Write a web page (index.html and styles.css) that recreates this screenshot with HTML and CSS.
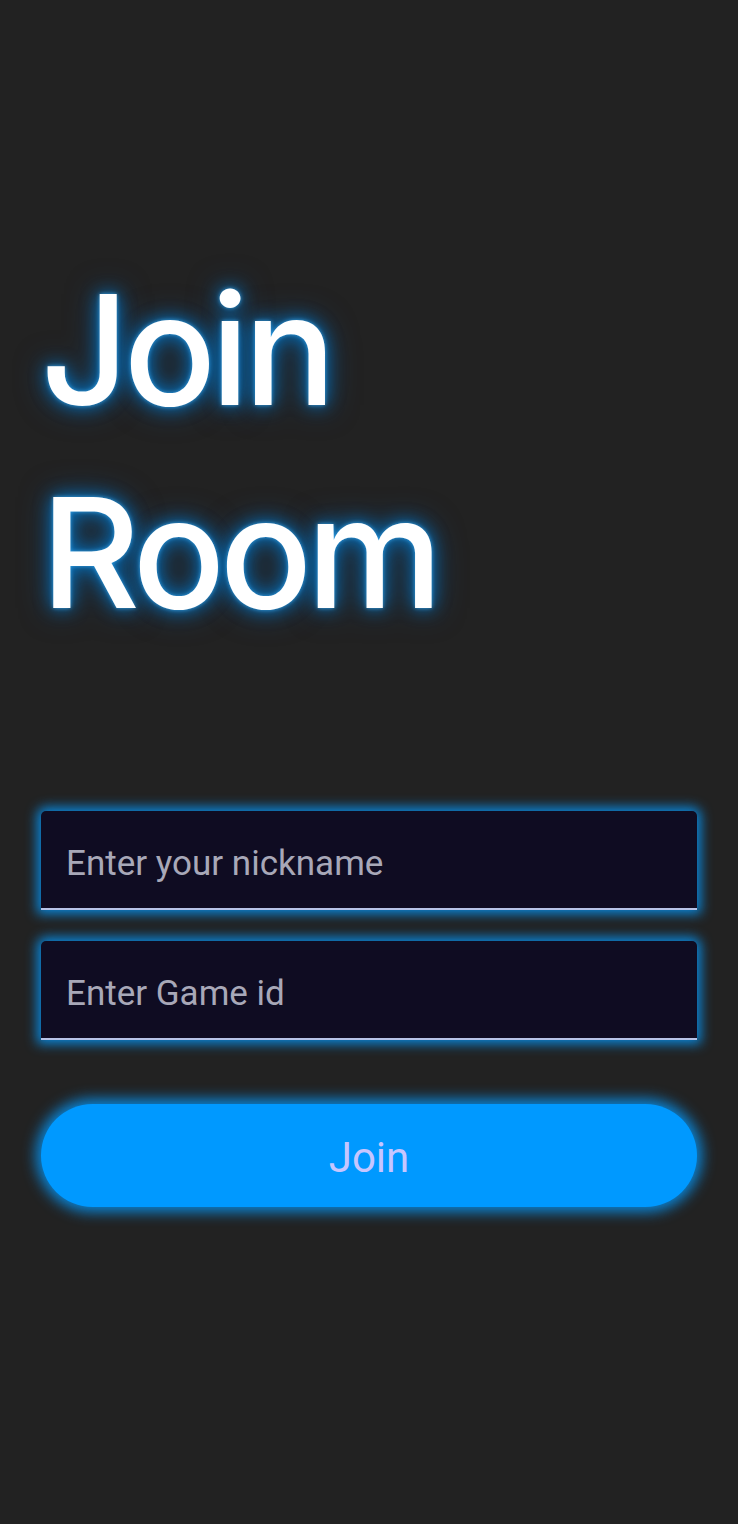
FILE: index.html
```html
<!DOCTYPE html>
<html>
<head>
<meta charset="utf-8">
<link rel="stylesheet" href="styles.css">
</head>
<body>
<main class="screen">
  <h1 class="title">Join<br>Room</h1>
  <form class="form">
    <div class="field"><input class="input" type="text" placeholder="Enter your nickname"></div>
    <div class="field"><input class="input" type="text" placeholder="Enter Game id"></div>
    <button class="btn" type="button">Join</button>
  </form>
</main>
</body>
</html>
```
FILE: styles.css
```css
html, body {
  margin: 0;
  padding: 0;
  background: #222222;
}
.screen {
  width: 738px;
  height: 1524px;
  box-sizing: border-box;
  padding: 248px 41px 0 41px;
  display: flex;
  flex-direction: column;
}
.title {
  margin: 0;
  font-family: "Inter", sans-serif;
  font-weight: 500;
  font-size: 153px;
  line-height: 203px;
  letter-spacing: -0.035em;
  color: #ffffff;
  text-shadow: 0 0 4px rgba(60, 170, 240, 0.9), 0 0 18px rgba(0, 130, 220, 0.9), 0 0 32px rgba(0, 100, 180, 0.6);
}
.form {
  margin-top: 157px;
  display: flex;
  flex-direction: column;
}
.field {
  height: 99px;
  background: #0f0c22;
  border-radius: 5px 5px 0 0;
  border-bottom: 2px solid #b8c4e8;
  box-sizing: border-box;
  box-shadow: 0 0 12px 4px #0a86d8;
  display: flex;
  align-items: center;
  padding-top: 7px;
  margin-bottom: 31px;
}
.input {
  width: 100%;
  background: transparent;
  border: none;
  outline: none;
  padding: 0 25px;
  font-family: "Roboto", sans-serif;
  font-size: 35px;
  color: #c8c8d8;
}
.input::placeholder {
  color: #a8a8b8;
}
.btn {
  margin-top: 33px;
  height: 103px;
  border: none;
  border-radius: 52px;
  background: #0099ff;
  color: #c6c6ff;
  font-family: "Roboto", sans-serif;
  font-size: 42px;
  padding-top: 4px;
  box-shadow: 0 0 14px 5px #0a86d8;
}
```
